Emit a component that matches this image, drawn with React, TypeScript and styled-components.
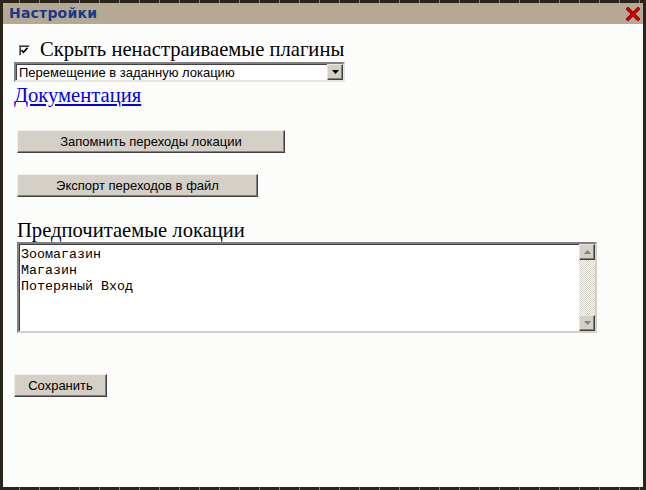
import React from "react";
import styled, { createGlobalStyle } from "styled-components";

const Global = createGlobalStyle`
  html, body { margin: 0; padding: 0; background: #fff; }
  body { width: 646px; height: 490px; overflow: hidden; }
`;

const Frame = styled.div`
  box-sizing: border-box;
  width: 646px;
  height: 490px;
  padding: 3px;
  background:
    repeating-linear-gradient(90deg, #2a251a 0 19px, #8a8470 19px 20px),
    #2a251a;
  display: flex;
  flex-direction: column;
`;

const Inner = styled.div`
  flex: 1;
  display: flex;
  flex-direction: column;
  background: #fcfdfb;
`;

const TitleBar = styled.div`
  height: 21px;
  background: #b5a993;
  display: flex;
  align-items: center;
  justify-content: space-between;
  padding: 0 3px 0 6px;
`;

const Title = styled.span`
  font-family: "DejaVu Sans", Verdana, sans-serif;
  font-weight: bold;
  font-size: 14px;
  letter-spacing: 0.2px;
  color: #163b8c;
  line-height: 21px;
`;

const CloseIcon = styled.svg`
  width: 14px;
  height: 14px;
  margin-top: 1px;
`;

const Body = styled.div`
  display: flex;
  flex-direction: column;
  align-items: flex-start;
  padding: 14px 0 0 11px;
`;

const CheckRow = styled.label`
  display: flex;
  align-items: center;
  gap: 10px;
  padding-left: 5px;
  font-family: "Liberation Serif", "Times New Roman", serif;
  font-size: 20.6px;
  line-height: 23px;
  color: #000;
`;

const Box = styled.span`
  box-sizing: border-box;
  width: 11px;
  height: 11px;
  margin-top: 2px;
  border: 1px solid;
  border-color: #808080 #fff #fff #808080;
  box-shadow: inset 1px 1px #404040;
  background: #fff;
  display: flex;
  align-items: center;
  justify-content: center;
`;

const Select = styled.div`
  box-sizing: border-box;
  margin-top: 1px;
  width: 331px;
  height: 20px;
  border: 2px solid;
  border-color: #808080 #e8e6e0 #e8e6e0 #808080;
  box-shadow: inset 1px 1px #404040;
  background: #fff;
  display: flex;
  align-items: center;
  justify-content: space-between;
  padding-left: 3px;
  font-family: "Liberation Sans", Arial, sans-serif;
  font-size: 13px;
  color: #000;
`;

const DropBtn = styled.span`
  box-sizing: border-box;
  width: 16px;
  height: 16px;
  background: #d4d0c8;
  border: 1px solid;
  border-color: #e8e6e0 #404040 #404040 #e8e6e0;
  box-shadow: inset -1px -1px #808080;
  display: flex;
  align-items: center;
  justify-content: center;
`;

const DocLink = styled.a`
  margin-top: 2px;
  font-family: "Liberation Serif", "Times New Roman", serif;
  font-size: 20.6px;
  line-height: 23px;
  color: #0000ee;
  text-decoration: underline;
`;

const Button = styled.button<{ $w: number; $mt: number; $ml?: number }>`
  box-sizing: border-box;
  width: ${(p) => p.$w}px;
  height: 23px;
  margin: ${(p) => p.$mt}px 0 0 ${(p) => p.$ml ?? 3}px;
  padding: 0;
  background: #d4d0c8;
  border: 1px solid;
  border-color: #f0efea #404040 #404040 #f0efea;
  box-shadow: inset -1px -1px #808080;
  font-family: "Liberation Sans", Arial, sans-serif;
  font-size: 13px;
  color: #000;
  text-align: center;
`;

const Heading = styled.div`
  margin: 22px 0 0 3px;
  font-family: "Liberation Serif", "Times New Roman", serif;
  font-size: 20.6px;
  line-height: 23px;
  color: #000;
`;

const TextArea = styled.div`
  box-sizing: border-box;
  margin-left: 3px;
  width: 580px;
  height: 91px;
  border: 2px solid;
  border-color: #808080 #d4d0c8 #d4d0c8 #808080;
  box-shadow: inset 1px 1px #404040;
  background: #fff;
  display: flex;
`;

const Lines = styled.div`
  flex: 1;
  padding: 3px 0 0 2px;
  font-family: "Liberation Mono", "Courier New", monospace;
  font-size: 13.33px;
  line-height: 16px;
  color: #000;
  white-space: pre;
`;

const ScrollBar = styled.div`
  width: 16px;
  display: flex;
  flex-direction: column;
  justify-content: space-between;
  background: repeating-conic-gradient(#d4d0c8 0 25%, #fff 0 50%) 0 0 / 2px 2px;
`;

const ScrollBtn = styled.span`
  box-sizing: border-box;
  width: 16px;
  height: 16px;
  background: #d4d0c8;
  border: 1px solid;
  border-color: #e8e6e0 #404040 #404040 #e8e6e0;
  box-shadow: inset -1px -1px #808080;
  display: flex;
  align-items: center;
  justify-content: center;
`;

const Arrow = ({ dir, color = "#000" }: { dir: "up" | "down"; color?: string }) => (
  <svg width="7" height="4" viewBox="0 0 7 4">
    {dir === "down" ? (
      <polygon points="0,0 7,0 3.5,4" fill={color} />
    ) : (
      <polygon points="0,4 7,4 3.5,0" fill={color} />
    )}
  </svg>
);

export default function App() {
  return (
    <>
      <Global />
      <Frame>
        <Inner>
          <TitleBar>
            <Title>Настройки</Title>
            <CloseIcon viewBox="0 0 14 14">
              <path d="M2 2 L12 12 M12 2 L2 12" stroke="#8a0000" strokeWidth="3.6" strokeLinecap="square" />
              <path d="M2 2 L12 12 M12 2 L2 12" stroke="#d40000" strokeWidth="2.2" strokeLinecap="square" />
            </CloseIcon>
          </TitleBar>
          <Body>
            <CheckRow>
              <Box>
                <svg width="7" height="7" viewBox="0 0 7 7">
                  <path d="M0.5 3 L2.5 5.2 L6.5 0.8" stroke="#000" strokeWidth="1.6" fill="none" />
                </svg>
              </Box>
              Скрыть ненастраиваемые плагины
            </CheckRow>
            <Select>
              <span>Перемещение в заданную локацию</span>
              <DropBtn>
                <Arrow dir="down" />
              </DropBtn>
            </Select>
            <DocLink href="#">Документация</DocLink>
            <Button $w={268} $mt={23}>Запомнить переходы локации</Button>
            <Button $w={241} $mt={21}>Экспорт переходов в файл</Button>
            <Heading>Предпочитаемые локации</Heading>
            <TextArea>
              <Lines>{"Зоомагазин\nМагазин\nПотеряный Вход"}</Lines>
              <ScrollBar>
                <ScrollBtn>
                  <Arrow dir="up" color="#808080" />
                </ScrollBtn>
                <ScrollBtn>
                  <Arrow dir="down" color="#808080" />
                </ScrollBtn>
              </ScrollBar>
            </TextArea>
            <Button $w={93} $mt={41} $ml={0}>Сохранить</Button>
          </Body>
        </Inner>
      </Frame>
    </>
  );
}
